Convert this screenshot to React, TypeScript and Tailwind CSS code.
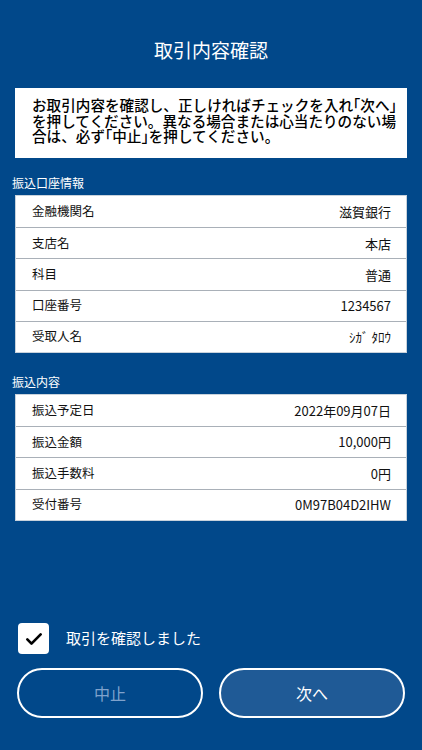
export default function App() {
  const account = [
    ["金融機関名", "滋賀銀行"],
    ["支店名", "本店"],
    ["科目", "普通"],
    ["口座番号", "1234567"],
    ["受取人名", "ｼｶﾞ ﾀﾛｳ"],
  ]
  const detail = [
    ["振込予定日", "2022年09月07日"],
    ["振込金額", "10,000円"],
    ["振込手数料", "0円"],
    ["受付番号", "0M97B04D2IHW"],
  ]

  return (
    <main
      className="w-[422px] h-[750px] bg-[#01488a] text-white flex flex-col"
      style={{ fontFamily: '"Noto Sans CJK JP", "Noto Sans", sans-serif' }}
    >
      {/* Header */}
      <h1 className="pt-[36px] h-[88px] text-center text-[19px] leading-[28px]">取引内容確認</h1>

      {/* Notice */}
      <div className="mx-[15px] h-[70px] bg-white text-black pl-[17px] pr-[8px] pt-[9px] text-[14.6px] leading-[15.7px] font-medium">
        お取引内容を確認し、正しければチェックを入れ｢次へ｣を押してください。異なる場合または心当たりのない場合は、必ず｢中止｣を押してください。
      </div>

      {/* 振込口座情報 */}
      <p className="mt-[17px] ml-[12px] text-[12px] leading-[16px]">振込口座情報</p>
      <Table rows={account} />

      {/* 振込内容 */}
      <p className="mt-[21px] ml-[12px] text-[12px] leading-[16px]">振込内容</p>
      <Table rows={detail} />

      {/* Confirm */}
      <div className="mt-auto flex items-center ml-[18px] mb-[14px]">
        <div className="w-[31px] h-[31px] rounded-[4px] bg-white flex items-center justify-center">
          <svg width="20" height="20" viewBox="0 0 24 24" fill="none">
            <path d="M4 12.5l5 5L20 6.5" stroke="#000" strokeWidth="3.2" strokeLinecap="round" strokeLinejoin="round" />
          </svg>
        </div>
        <span className="ml-[17px] text-[15px]">取引を確認しました</span>
      </div>

      {/* Buttons */}
      <div className="flex gap-[16px] px-[17px] mb-[32px]">
        <button className="flex-1 h-[50px] rounded-full border-2 border-white text-[#7fa2cc] text-[16px]">中止</button>
        <button className="flex-1 h-[50px] rounded-full border-2 border-white bg-[#1f5a96] text-white text-[16px]">次へ</button>
      </div>
    </main>
  )
}

function Table({ rows }: { rows: string[][] }) {
  return (
    <div className="mx-[15px] mt-[4px] bg-white border border-[#c8d2dc]">
      {rows.map(([k, v], i) => (
        <div
          key={k}
          className={
            "h-[31.2px] flex items-center justify-between pl-[16px] pr-[15px] text-[12.5px] text-[#111] " +
            (i > 0 ? "border-t border-[#a9b0b8]" : "")
          }
        >
          <span>{k}</span>
          <span className="text-[13px]">{v}</span>
        </div>
      ))}
    </div>
  )
}
